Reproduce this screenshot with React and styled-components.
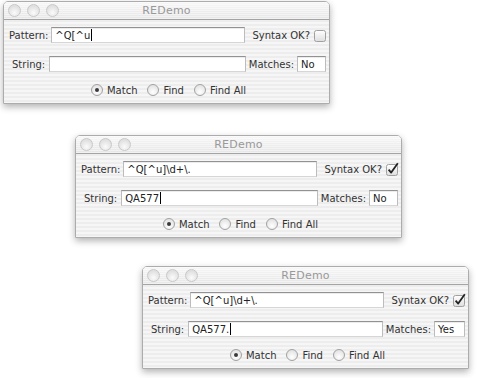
import React from 'react';
import styled, { createGlobalStyle } from 'styled-components'

const GlobalStyle = createGlobalStyle`
  body {
    margin: 0;
    background: #ffffff;
    font-family: "DejaVu Sans", "Liberation Sans", sans-serif;
  }
`

const Desktop = styled.div`
  display: flex;
  flex-direction: column;
  align-items: flex-start;
  padding-top: 1px;
  width: 478px;
  height: 378px;
  box-sizing: border-box;
`

const Window = styled.div`
  width: 325px;
  margin-left: ${({offset}) => offset || 0}px;
  margin-top: ${({top}) => top || 0}px;
  border: solid 1px #acacac;
  border-radius: 5px 5px 0 0;
  box-shadow: 0 3px 7px rgba(0, 0, 0, 0.3);
  background: repeating-linear-gradient(#f6f6f6 0 2px, #ededed 2px 4px);
  overflow: hidden;
`

const TitleBar = styled.div`
  height: 17px;
  display: grid;
  grid-template-columns: 1fr auto 1fr;
  align-items: center;
  border-bottom: solid 1px #a4a4a4;
  background:
    repeating-linear-gradient(rgba(255,255,255,0.45) 0 1px, transparent 1px 2px),
    linear-gradient(#f7f7f7, #e6e6e6);
`

const Lights = styled.div`
  display: flex;
  gap: 6px;
  padding-left: 4px;
`

const Light = styled.div`
  width: 11px;
  height: 11px;
  border-radius: 50%;
  border: solid 1px #c8c8c8;
  background: radial-gradient(circle at 50% 70%, #fbfbfb, #e0e0e0 70%);
`

const Title = styled.div`
  font-size: 11px;
  color: #999999;
  letter-spacing: 0.2px;
`

const Body = styled.div`
  display: flex;
  flex-direction: column;
  padding: 7px 0 7px 0;
`

const Row = styled.div`
  display: flex;
  align-items: center;
  height: 16px;
  padding-left: ${({inset}) => inset}px;
  padding-right: 2px;
  margin-bottom: ${({space}) => space || 0}px;
`

const Label = styled.span`
  font-size: 10px;
  color: #333;
  white-space: nowrap;
  margin-right: ${({gap}) => gap || 0}px;
`

const Field = styled.div`
  flex: ${({fixed}) => fixed ? '0 0 auto' : '1'};
  width: ${({w}) => w ? w + 'px' : 'auto'};
  height: 16px;
  box-sizing: border-box;
  display: flex;
  align-items: center;
  padding: 0 3px;
  background: #ffffff;
  border: solid 1px #bcbcbc;
  border-top-color: #929292;
  border-bottom-color: #d6d6d6;
  box-shadow: inset 0 1px 0 #ececec;
  font-size: 10px;
  color: #222;
  white-space: pre;
  margin-right: ${({gap}) => gap || 0}px;
`

const Caret = styled.span`
  display: inline-block;
  width: 1px;
  height: 12px;
  margin-left: 1px;
  background: #000;
`

const RadioRow = styled.div`
  display: flex;
  justify-content: center;
  align-items: center;
  height: 12px;
  gap: 10px;
  padding-left: 4px;
`

const RadioItem = styled.label`
  display: flex;
  align-items: center;
  gap: 4px;
  font-size: 10px;
  color: #333;
`

const RadioDot = styled.span`
  width: 12px;
  height: 12px;
  box-sizing: border-box;
  border-radius: 50%;
  border: solid 1px #a2a2a2;
  background: radial-gradient(circle at 50% 70%, #ffffff, #e4e4e4 75%);
  display: flex;
  align-items: center;
  justify-content: center;

  &::after {
    content: '';
    width: 4px;
    height: 4px;
    border-radius: 50%;
    background: #3a3a3a;
    display: ${({on}) => on ? 'block' : 'none'};
  }
`

function CheckBox({checked}) {
  return (
    <svg width="14" height="14" viewBox="0 0 14 14" style={{flex: '0 0 auto'}}>
      <defs>
        <linearGradient id="cbg" x1="0" y1="0" x2="0" y2="1">
          <stop offset="0" stopColor="#ffffff" />
          <stop offset="1" stopColor="#dedede" />
        </linearGradient>
      </defs>
      <rect x="1.5" y="2.5" width="11" height="11" rx="2" fill="url(#cbg)" stroke="#a0a0a0" />
      {checked && (
        <path d="M3.6 7.6 L6.2 10.6 L12.8 1.2" fill="none" stroke="#222" strokeWidth="1.8" strokeLinejoin="round" />
      )}
    </svg>
  )
}

function Demo({offset, top, pattern, text, matches, matchW, checked, caretIn}) {
  return (
    <Window offset={offset} top={top}>
      <TitleBar>
        <Lights>
          <Light /><Light /><Light />
        </Lights>
        <Title>REDemo</Title>
        <div />
      </TitleBar>
      <Body>
        <Row inset={5} space={13}>
          <Label gap={3}>Pattern:</Label>
          <Field gap={8}>{pattern}{caretIn === 'pattern' && <Caret />}</Field>
          <Label gap={3}>Syntax OK?</Label>
          <CheckBox checked={checked} />
        </Row>
        <Row inset={8} space={12}>
          <Label gap={4}>String:</Label>
          <Field gap={3}>{text}{caretIn === 'string' && <Caret />}</Field>
          <Label gap={3}>Matches:</Label>
          <Field fixed w={matchW} gap={1}>{matches}</Field>
        </Row>
        <RadioRow>
          <RadioItem><RadioDot on />Match</RadioItem>
          <RadioItem><RadioDot />Find</RadioItem>
          <RadioItem><RadioDot />Find All</RadioItem>
        </RadioRow>
      </Body>
    </Window>
  )
}

function App() {
  return (
    <Desktop>
      <GlobalStyle />
      <Demo offset={3} top={0} pattern="^Q[^u" text="" matches="No" matchW={29} checked={false} caretIn="pattern" />
      <Demo offset={75} top={31} pattern="^Q[^u]\d+\." text="QA577" matches="No" matchW={29} checked caretIn="string" />
      <Demo offset={142} top={28} pattern="^Q[^u]\d+\." text="QA577." matches="Yes" matchW={31} checked caretIn="string" />
    </Desktop>
  )
}

export default App;
